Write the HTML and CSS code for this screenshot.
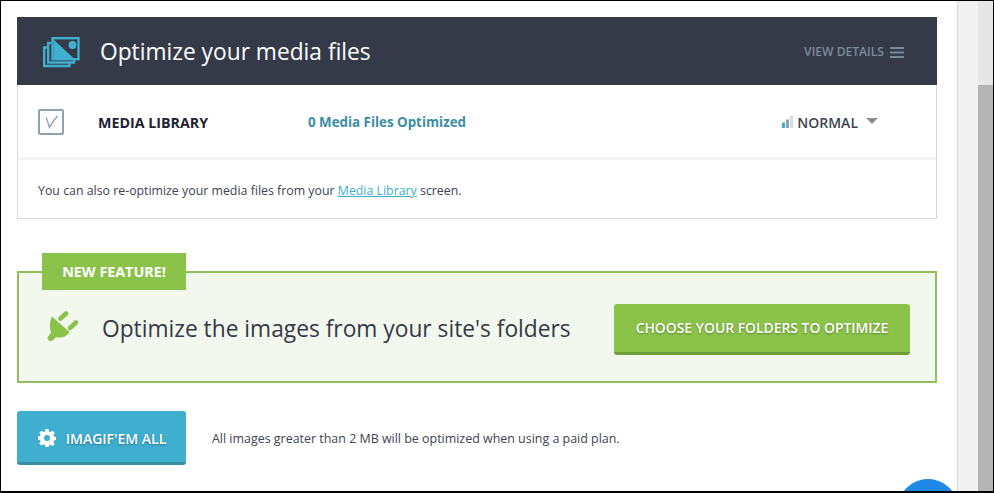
FILE: index.html
```html
<!DOCTYPE html>
<html lang="en">
<head>
<meta charset="utf-8">
<title>Optimize your media files</title>
<link rel="stylesheet" href="styles.css">
</head>
<body>
<div class="frame">
  <main class="content">
    <section class="panel">
      <header class="panel-head">
        <svg class="media-icon" width="37" height="31" viewBox="0 0 37 31">
          <path class="stack" d="M4.500 10.500H1.200V29H26.500V26"/>
          <path class="stack" d="M8.500 6H5.200V25.500H31V22"/>
          <rect class="pic-frame" x="9.500" y="1.200" width="26" height="21"/>
          <path class="pic-fill" d="M10.500 2.500L31 21.500H10.500Z"/>
          <circle class="pic-sun" cx="29.500" cy="8" r="4"/>
        </svg>
        <h1 class="panel-title">Optimize your media files</h1>
        <a class="details">VIEW DETAILS
          <svg class="burger" width="14" height="11" viewBox="0 0 14 11"><path d="M0 0h14v2H0zM0 4.500h14v2H0zM0 9h14v2H0z"/></svg>
        </a>
      </header>
      <div class="row">
        <span class="check">
          <svg width="16" height="14" viewBox="0 0 16 14"><path d="M3 2.500C4.500 5.500 5.500 9 6.500 12.500C8.500 8.500 11 5 14.500 1"/></svg>
        </span>
        <strong class="row-name">MEDIA LIBRARY</strong>
        <span class="row-count">0 Media Files Optimized</span>
        <span class="level">
          <svg width="11" height="12" viewBox="0 0 11 12"><rect class="b1" x="0" y="6.500" width="3" height="5.500"/><rect class="b2" x="4" y="3.500" width="3" height="8.500"/><rect class="b3" x="8" y="0" width="3" height="12"/></svg>
          NORMAL<i class="caret"></i>
        </span>
      </div>
      <p class="note">You can also re-optimize your media files from your <a href="#">Media Library</a> screen.</p>
    </section>

    <section class="feature">
      <span class="flag">NEW FEATURE!</span>
      <div class="feature-body">
        <svg class="plug" width="32" height="32" viewBox="0 0 32 32">
          <path class="plug-body" d="M6 6.500L23.500 22C20.500 27 15 28.500 10.500 27L6.500 30.500C4.500 32 1 30.500 1.500 27.500L5 22.500C3.500 18 3.500 11 6 6.500Z"/>
          <path class="plug-pin" d="M14.500 8.500L20 3.500M24 18L30 12.500"/>
        </svg>
        <h2 class="feature-title">Optimize the images from your site's folders</h2>
        <a class="btn btn-green">CHOOSE YOUR FOLDERS TO OPTIMIZE</a>
      </div>
    </section>

    <div class="actions">
      <a class="btn btn-blue">
        <svg class="gear" width="18" height="18" viewBox="0 0 18 18"><path fill-rule="evenodd" d="M7.500 0h3l.5 2.400 1.500.6 2.100-1.300 2.100 2.100L15.400 5.900l.6 1.500 2 .5v3l-2 .5-.6 1.500 1.300 2.100-2.100 2.100-2.100-1.300-1.500.6-.5 2.100h-3L7 15.900l-1.500-.6-2.100 1.300-2.100-2.100L2.600 12.400 2 10.900l-2-.5v-3l2-.5.600-1.500L1.300 3.800l2.100-2.100 2.100 1.300L7 2.400zM9 6a3 3 0 1 0 0 6 3 3 0 0 0 0-6z"/></svg>
        IMAGIF'EM ALL
      </a>
      <p class="actions-note">All images greater than 2 MB will be optimized when using a paid plan.</p>
    </div>
  </main>
  <aside class="gutter"></aside>
  <div class="scrollbar"><div class="thumb"></div></div>
  <span class="chat"></span>
</div>
</body>
</html>
```

FILE: styles.css
```css
* { box-sizing: border-box; }
html, body { margin: 0; height: 100%; overflow: hidden; }
body { background: #fff; font-family: "Open Sans", sans-serif; color: #40434f; }
.frame { position: relative; display: flex; height: 493px; width: 994px; border: solid #000; border-width: 1px 1px 2px 1px; overflow: hidden; }
.content { width: 957px; flex: none; padding: 16px 20px 0 16px; border-right: 1px solid #dcdcdc; }
.gutter { width: 20px; flex: none; background: #f1f1f1; }
.scrollbar { flex: 1; background: #e6e6e6; padding-top: 84px; }
.thumb { height: 100%; background: #b4b4b4; }

.panel { border: 1px solid #d5d8dc; border-top: 0; height: 202px; }
.panel-head { margin: 0 -1px; height: 68px; background: #353a48; display: flex; align-items: center; padding: 0 33px 0 26px; }
.media-icon { flex: none; margin-top: 2px; }
.stack { fill: none; stroke: #40aecf; stroke-width: 2.400; }
.pic-frame { fill: #353a48; stroke: #40aecf; stroke-width: 2.400; }
.pic-fill { fill: #40aecf; }
.pic-sun { fill: #40aecf; }
.panel-title { margin: 2px 0 0 20px; font-size: 22.750px; font-weight: 400; color: #fff; flex: 1; line-height: 32px; }
.details { display: flex; align-items: center; gap: 6px; font-size: 12.100px; font-weight: 600; color: #7b8a9b; }
.burger { fill: #7b8a9b; margin-top: 2px; }

.row { height: 75px; border-bottom: 3px solid #f4f4f4; display: flex; align-items: center; padding: 2px 58px 0 20px; }
.check { width: 26px; height: 26px; border: 2px solid #8ea2b2; border-radius: 2px; display: flex; align-items: center; justify-content: center; margin-right: 34px; }
.check svg { fill: none; stroke: #8ea2b2; stroke-width: 1.400; }
.row-name { width: 210px; font-size: 14.250px; font-weight: 700; color: #1f2332; }
.row-count { flex: 1; font-size: 13.350px; font-weight: 700; color: #3a8ea5; }
.level { display: flex; align-items: center; font-size: 14px; font-weight: 600; color: #40434f; }
.level svg { margin-right: 4px; }
.b1 { fill: #40aecf; }
.b2 { fill: #8ea2b2; }
.b3 { fill: #d5dde2; }
.caret { width: 0; height: 0; margin: -2px 0 0 8px; border: solid transparent; border-width: 6px 6px 0; border-top-color: #8a8d94; }
.note { margin: 0; padding: 1px 20px 0; font-size: 12.320px; line-height: 60px; color: #40434f; word-spacing: .1px; }
.note a { color: #40aecf; text-decoration: underline; }

.feature { position: relative; margin-top: 52px; height: 112px; border: 2px solid #93bf5a; background: #f3f8ee; }
.flag { position: absolute; left: 23px; top: -20px; width: 144px; height: 37px; background: #8bc34a; color: #fff; font-size: 14.300px; font-weight: 700; line-height: 37px; text-align: center; }
.feature-body { display: flex; align-items: center; height: 100%; padding: 3px 25px 0 27px; }
.plug { fill: #8bc34a; flex: none; margin-top: -6px; }
.plug-pin { fill: none; stroke: #8bc34a; stroke-width: 4.500; stroke-linecap: round; }
.feature-title { flex: 1; margin: 0 0 0 24px; font-size: 22.750px; font-weight: 400; color: #343947; white-space: nowrap; }

.btn { display: flex; align-items: center; justify-content: center; border-radius: 3px; color: #fff; font-weight: 600; text-shadow: 0 1px 2px rgba(0, 0, 0, .35); }
.btn-green { width: 296px; height: 51px; margin-top: 2px; padding-bottom: 2px; font-size: 13.900px; background: #8bc34a; border-bottom: 3px solid #6f9e3b; }
.btn-blue { width: 169px; height: 54px; padding: 3px 0 0 1px; font-size: 14px; background: #40aecf; border-bottom: 3px solid #3a8ea5; gap: 10px; }
.gear { fill: #fff; flex: none; }
.actions { display: flex; align-items: center; margin-top: 28px; gap: 26px; }
.actions-note { margin: 0; font-size: 12.450px; color: #40434f; }
.chat { position: absolute; left: 897px; top: 478px; width: 60px; height: 60px; border-radius: 50%; background: #1e88e5; }
```
